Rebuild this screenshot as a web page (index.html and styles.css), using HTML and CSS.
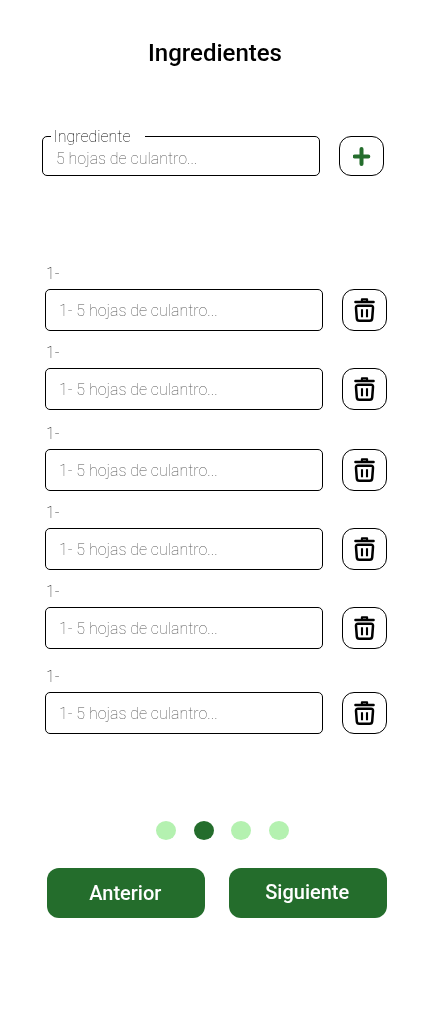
FILE: index.html
```html
<!DOCTYPE html>
<html lang="es">
<head>
<meta charset="utf-8">
<title>Ingredientes</title>
<link rel="stylesheet" href="styles.css">
</head>
<body>
<svg class="sprite" aria-hidden="true">
  <symbol id="trash" viewBox="0 0 22 26">
    <path d="M1.4 5H19.6" fill="none" stroke="currentColor" stroke-width="2.4" stroke-linecap="round"/>
    <path d="M7.9 4.4V2.4H13.1V4.4" fill="none" stroke="currentColor" stroke-width="2.1" stroke-linejoin="round"/>
    <path d="M4 8.7H17Q19.2 8.7 19 10.9L18.2 21.4Q18 23.8 15.6 23.8H5.4Q3 23.8 2.8 21.4L2 10.9Q1.8 8.7 4 8.7Z" fill="none" stroke="currentColor" stroke-width="2.5"/>
    <path d="M8 12.2V20.2M13 12.2V20.2" fill="none" stroke="currentColor" stroke-width="2.1"/>
  </symbol>
</svg>
<main class="screen">
  <h1 class="title">Ingredientes</h1>
  <div class="add-row">
    <div class="field-outline">
      <span class="field-label">Ingrediente</span>
      <span class="placeholder">5 hojas de culantro...</span>
    </div>
    <button class="icon-button add" aria-label="Agregar">
      <svg width="18" height="20" viewBox="0 0 18 20"><path d="M1.7 10.5H15.3M8.5 3V18" stroke="currentColor" stroke-width="4" stroke-linecap="round"/></svg>
    </button>
  </div>
  <div class="list">
    <div class="item"><span class="number">1-</span><div class="item-row"><div class="box">1- 5 hojas de culantro...</div><button class="icon-button" aria-label="Eliminar"><svg class="trash"><use href="#trash"/></svg></button></div></div>
    <div class="item"><span class="number">1-</span><div class="item-row"><div class="box">1- 5 hojas de culantro...</div><button class="icon-button" aria-label="Eliminar"><svg class="trash"><use href="#trash"/></svg></button></div></div>
    <div class="item spaced"><span class="number">1-</span><div class="item-row"><div class="box">1- 5 hojas de culantro...</div><button class="icon-button" aria-label="Eliminar"><svg class="trash"><use href="#trash"/></svg></button></div></div>
    <div class="item"><span class="number">1-</span><div class="item-row"><div class="box">1- 5 hojas de culantro...</div><button class="icon-button" aria-label="Eliminar"><svg class="trash"><use href="#trash"/></svg></button></div></div>
    <div class="item"><span class="number">1-</span><div class="item-row"><div class="box">1- 5 hojas de culantro...</div><button class="icon-button" aria-label="Eliminar"><svg class="trash"><use href="#trash"/></svg></button></div></div>
    <div class="item last"><span class="number">1-</span><div class="item-row"><div class="box">1- 5 hojas de culantro...</div><button class="icon-button" aria-label="Eliminar"><svg class="trash"><use href="#trash"/></svg></button></div></div>
  </div>
  <div class="dots"><i class="dot"></i><i class="dot active"></i><i class="dot"></i><i class="dot"></i></div>
  <div class="actions"><button class="action">Anterior</button><button class="action next">Siguiente</button></div>
</main>
</body>
</html>
```
FILE: styles.css
```css
* { box-sizing: border-box; }
body { margin: 0; background: #fff; font-family: Roboto, sans-serif; color: #000; }
button { font-family: inherit; padding: 0; }
.sprite { display: none; }
.screen { width: 430px; height: 1023px; padding-top: 38px; overflow: hidden; will-change: transform; }
.title { margin: 0; font-size: 24px; line-height: 30px; font-weight: 500; text-align: center; }
.add-row { display: flex; gap: 19px; margin: 68px 0 0 42px; }
.field-outline { position: relative; width: 278px; height: 40px; padding: 12px 13px 0; border: 1px solid #000; border-radius: 5px; }
.field-label { position: absolute; left: 8px; top: -10px; width: 94px; padding-left: 2.5px; background: #fff; font-size: 16px; line-height: 20px; font-weight: 100; color: #000; }
.placeholder { display: block; font-size: 16px; line-height: 20px; font-weight: 100; color: #555; }
.icon-button { display: flex; align-items: center; justify-content: center; width: 45px; height: 42px; background: #fff; border: 1px solid #000; border-radius: 12px; color: #000; }
.add { height: 40px; color: #246d2c; }
.trash { width: 22px; height: 26px; }
.list { margin: 87px 0 0 45px; }
.item { height: 79px; }
.item.spaced { margin-top: 2px; }
.item.last { margin-top: 6px; }
.number { display: block; height: 26px; padding: 1px 0 0 1px; font-size: 16px; line-height: 20px; font-weight: 100; color: #222; }
.item-row { display: flex; gap: 19px; }
.box { width: 278px; height: 42px; padding-left: 13px; border: 1px solid #000; border-radius: 5px; font-size: 16px; line-height: 42px; font-weight: 100; color: #555; }
.dots { display: flex; gap: 17.7px; margin: 76px 0 0 156px; }
.dot { width: 20px; height: 19px; border-radius: 50%; background: #b4f1b0; }
.dot.active { background: #246d2c; }
.actions { display: flex; gap: 24px; margin: 28px 0 0 47px; }
.action { width: 158px; height: 50px; padding-right: 1.5px; border: 0; border-radius: 12px; background: #246d2c; color: #fff; font-size: 20px; font-weight: 500; }
.next { padding-bottom: 2px; }
```
